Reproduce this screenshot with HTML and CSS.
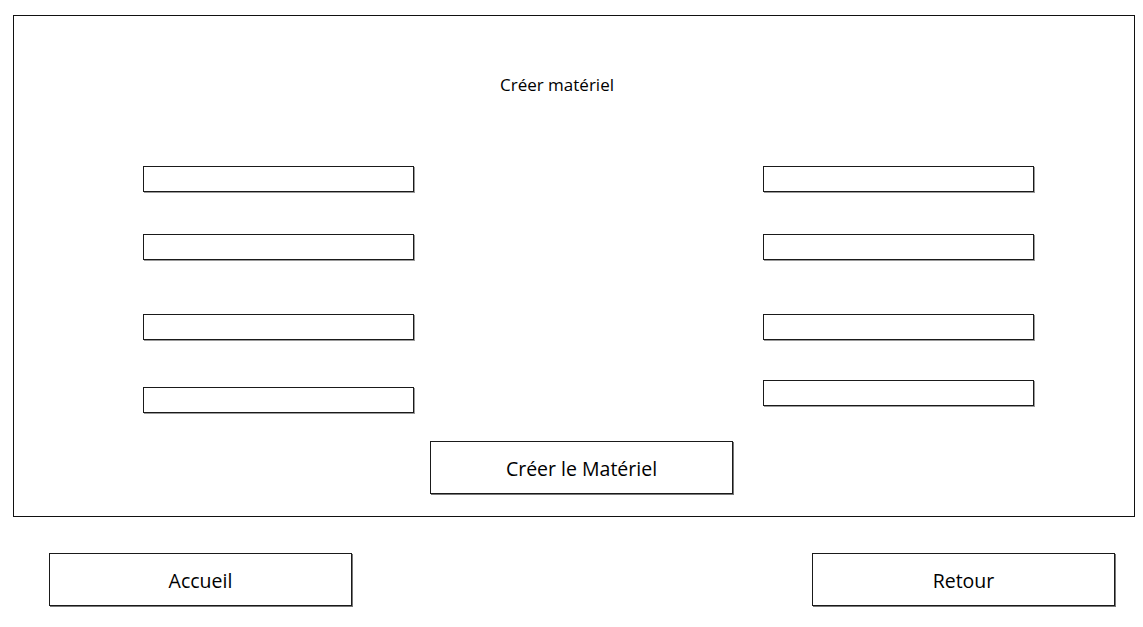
FILE: index.html
```html
<!DOCTYPE html>
<html lang="fr">
<head>
<meta charset="utf-8">
<title>Créer matériel</title>
<link rel="stylesheet" href="styles.css">
</head>
<body>
<div class="frame">
  <h1 class="title">Créer matériel</h1>
  <div class="fields">
    <div class="col">
      <input class="field f1" type="text">
      <input class="field f2" type="text">
      <input class="field f3" type="text">
      <input class="field f4" type="text">
    </div>
    <div class="col">
      <input class="field f1" type="text">
      <input class="field f2" type="text">
      <input class="field f3" type="text">
      <input class="field f4r" type="text">
    </div>
  </div>
  <button class="btn create">Créer le Matériel</button>
</div>
<div class="nav">
  <button class="btn">Accueil</button>
  <button class="btn">Retour</button>
</div>
</body>
</html>
```
FILE: styles.css
```css
html, body {
  margin: 0;
  padding: 0;
  background: #fff;
}
body {
  font-family: "Open Sans", "Noto Sans", sans-serif;
  color: #000;
  width: 1143px;
  height: 627px;
  overflow: hidden;
}
.frame {
  margin: 15px 0 0 13px;
  width: 1122px;
  height: 502px;
  box-sizing: border-box;
  border: 1px solid #111;
  display: flex;
  flex-direction: column;
}
.title {
  margin: 59px 0 0 0;
  padding-right: 34px;
  height: 20px;
  line-height: 20px;
  font-size: 17px;
  font-weight: normal;
  text-align: center;
}
.fields {
  display: grid;
  grid-template-columns: 271px 271px;
  column-gap: 349px;
  padding-left: 129px;
  margin-top: 71px;
}
.col {
  display: flex;
  flex-direction: column;
}
.field {
  display: block;
  width: 271px;
  height: 26px;
  box-sizing: border-box;
  margin: 0;
  padding: 0;
  border: 1px solid #1a1a1a;
  box-shadow: 1px 1px 0 #9a9a9a;
  background: #fff;
}
.f2 { margin-top: 42px; }
.f3 { margin-top: 54px; }
.f4 { margin-top: 47px; }
.f4r { margin-top: 40px; }
.btn {
  width: 303px;
  height: 53px;
  box-sizing: border-box;
  border: 1px solid #1a1a1a;
  box-shadow: 1px 1px 0 #777;
  background: #fff;
  font-family: "Open Sans", "Noto Sans", sans-serif;
  font-size: 19.5px;
  color: #000;
  padding: 1px 0 0 0;
}
.create {
  margin-left: 416px;
  margin-top: 28px;
}
.nav {
  display: flex;
  justify-content: space-between;
  padding: 0 28px 0 49px;
  margin-top: 36px;
}
```
